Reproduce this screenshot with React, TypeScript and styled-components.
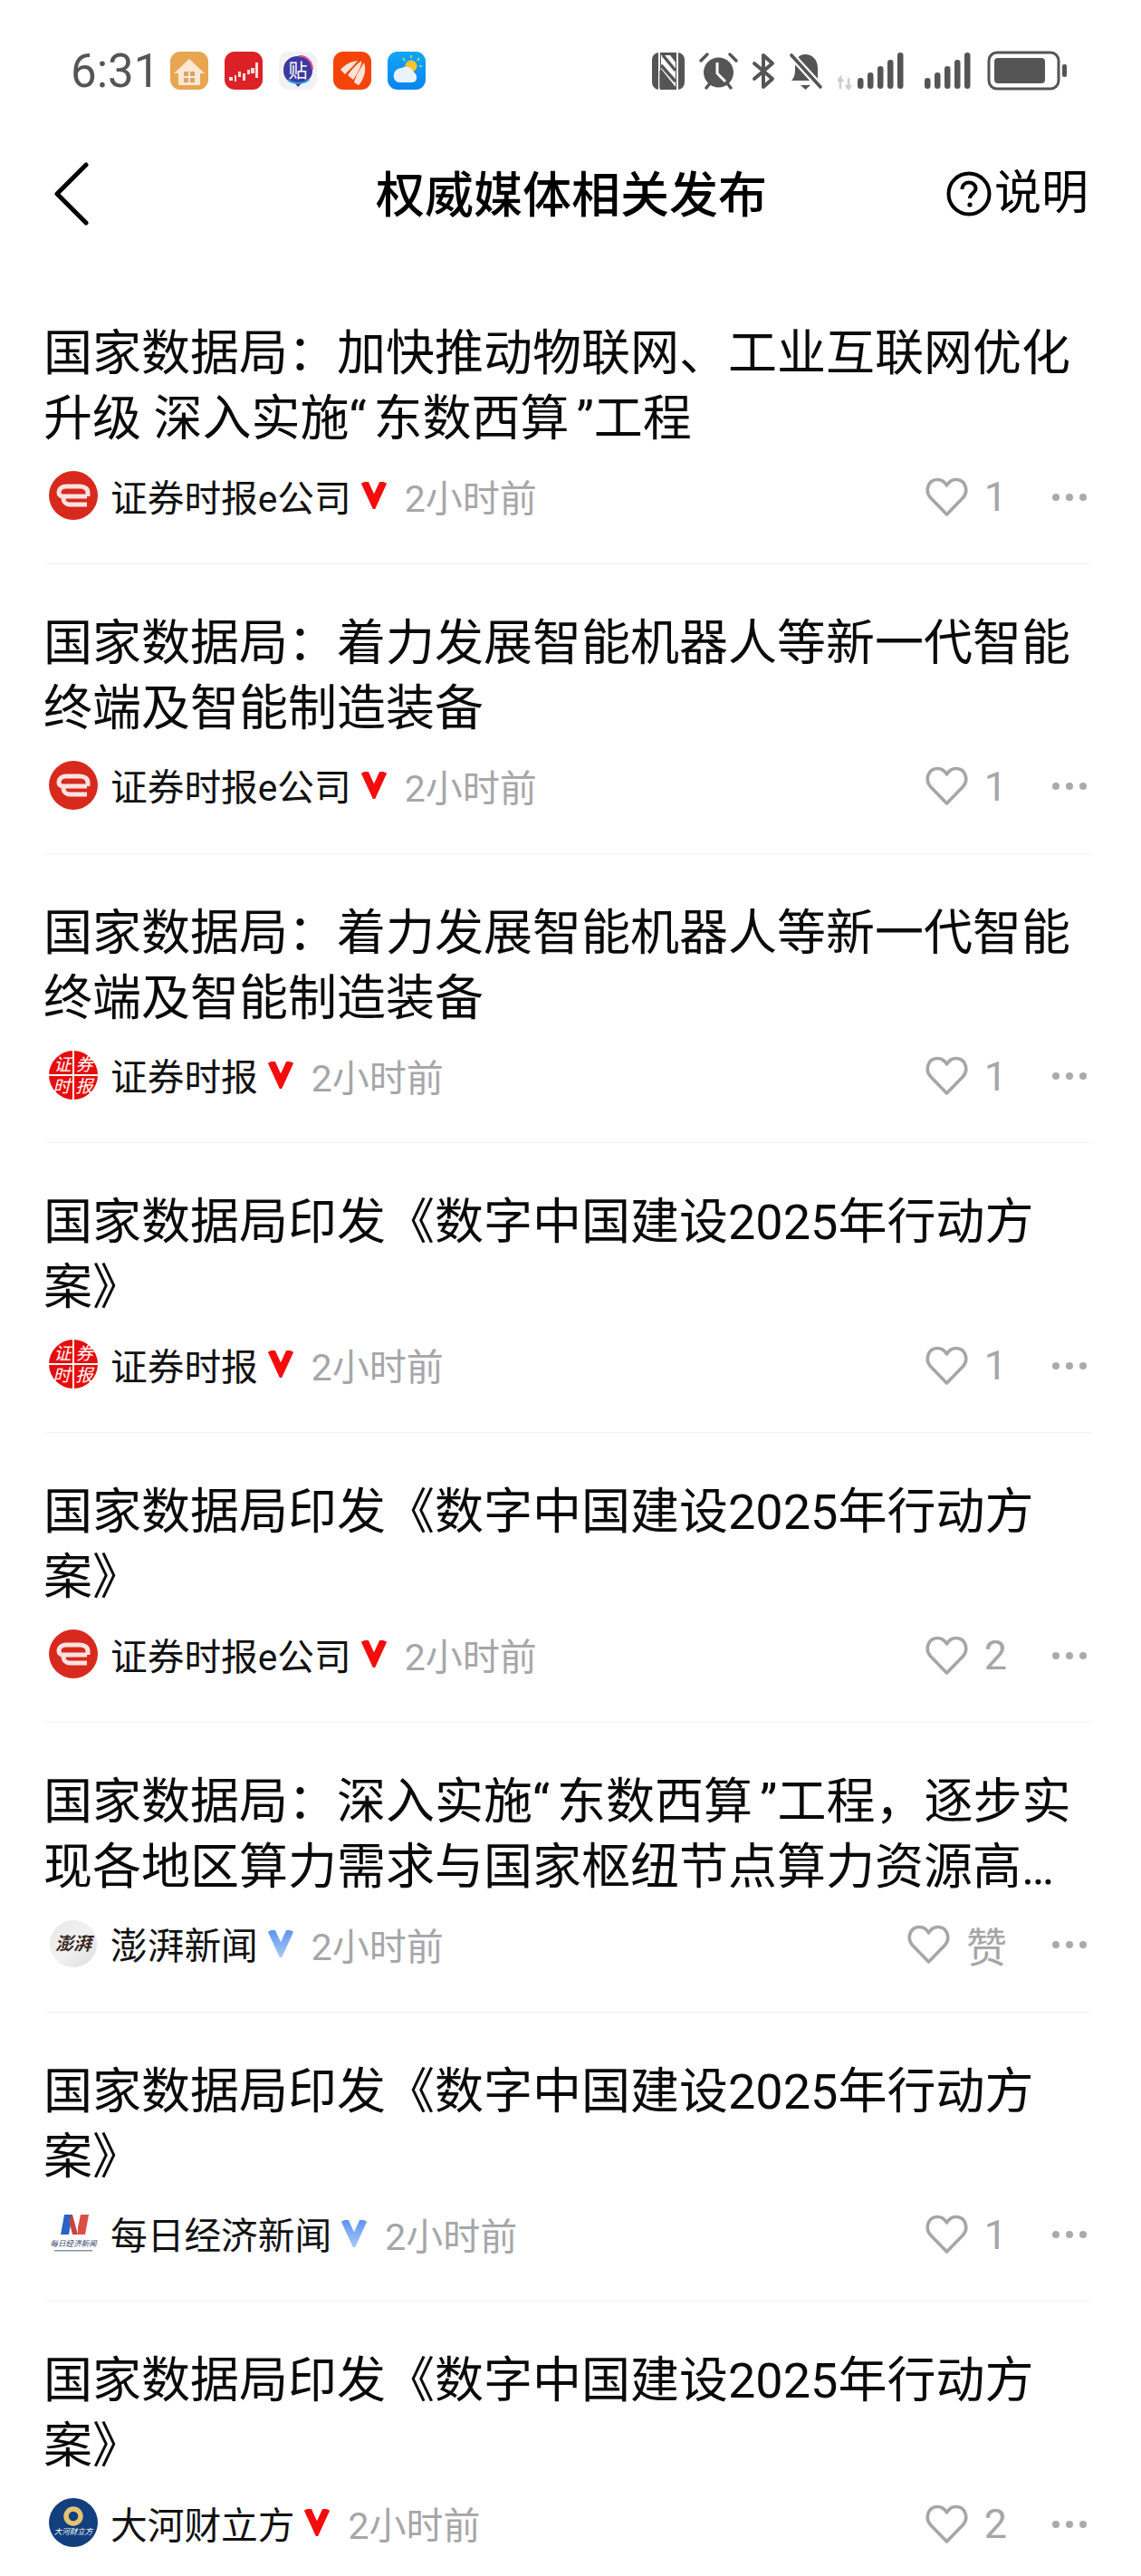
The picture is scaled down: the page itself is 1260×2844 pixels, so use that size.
import styled, { createGlobalStyle } from "styled-components";

const GlobalStyle = createGlobalStyle`
  html, body {
    margin: 0;
    padding: 0;
    background: #fff;
  }
  body {
    font-family: Roboto, "Noto Sans CJK SC", sans-serif;
    color: #000;
  }
`;

const Page = styled.div`
  width: 1260px;
  height: 2844px;
  overflow: hidden;
  background: #fff;
`;

const StatusBar = styled.div`
  height: 156px;
  padding: 0 82px 0 78px;
  box-sizing: border-box;
  display: flex;
  align-items: center;
`;

const Clock = styled.span`
  font-size: 51px;
  color: #555;
  width: 110px;
`;

const AppIcons = styled.div`
  display: flex;
  gap: 18px;
`;

const AppIcon = styled.div<{ $bg: string }>`
  width: 42px;
  height: 42px;
  border-radius: 11px;
  background: ${(props) => props.$bg};
  overflow: hidden;
  svg {
    display: block;
  }
`;

const SystemIcons = styled.div`
  margin-left: auto;
  display: flex;
  align-items: center;
  svg {
    display: block;
  }
`;

const NavBar = styled.div`
  height: 118px;
  padding: 0 58px 0 60px;
  display: grid;
  grid-template-columns: 1fr auto 1fr;
  align-items: center;
`;

const NavTitle = styled.h1`
  margin: 3px 0 0;
  font-size: 54px;
  font-weight: 500;
  line-height: 72px;
`;

const HelpLink = styled.div`
  justify-self: end;
  display: flex;
  align-items: center;
  gap: 3px;
  font-size: 52px;
  line-height: 72px;
  margin-top: -2px;
`;

const List = styled.div`
  padding: 29px 56px 0 48px;
`;

const Item = styled.div`
  padding-top: 52px;
  height: 319.75px;
  box-sizing: border-box;
  border-bottom: 1px solid #f1f1f1;
  margin-left: 3px;
`;

const Title = styled.div`
  font-size: 54px;
  line-height: 72px;
  height: 144px;
  margin-left: -3px;
  margin-right: -8px;
  color: #0a0a0a;
`;

const TitleLine = styled.div``;

const Quote = styled.span<{ $closing: boolean }>`
  margin: ${(props) => (props.$closing ? "0 0 0 8px" : "0 8px 0 0")};
`;

const Meta = styled.div`
  margin-top: 18px;
  height: 60px;
  display: flex;
  align-items: center;
`;

const Avatar = styled.div`
  width: 54px;
  height: 54px;
  margin-left: 3px;
  flex: none;
  svg {
    display: block;
  }
`;

const Source = styled.span`
  margin-left: 14px;
  font-size: 40.7px;
  color: #111;
`;

const Verified = styled.span`
  margin: 0 19px 0 10px;
  display: flex;
`;

const Time = styled.span`
  font-size: 41px;
  color: #a6a6a9;
`;

const Actions = styled.div`
  margin-left: auto;
  margin-top: 3px;
  padding-right: 4px;
  display: flex;
  align-items: center;
`;

const Count = styled.span`
  margin-left: 18px;
  font-size: 45px;
  color: #a6a6a9;
`;

const Dots = styled.div`
  margin-left: 50px;
  width: 38px;
  display: flex;
  justify-content: space-between;
`;

const Dot = styled.span`
  width: 8px;
  height: 8px;
  border-radius: 50%;
  background: #aaaaad;
`;

const grey = "#555";

function HomeIcon() {
  return (
    <svg width="42" height="42" viewBox="0 0 42 42">
      <path d="M21 8 L38 24 H33 V37 H9 V24 H4 Z" fill="#f9e8d2" />
      <path d="M15 22h5v5h-5zM22 22h5v5h-5zM15 29h5v5h-5zM22 29h5v5h-5z" fill="#dca268" />
    </svg>
  );
}

function StockIcon() {
  return (
    <svg width="42" height="42" viewBox="0 0 42 42">
      <g fill="#fff" opacity="0.85">
        <rect x="5" y="28" width="4" height="4" />
        <rect x="11" y="26" width="2" height="7" />
        <rect x="15" y="22" width="3" height="6" />
        <rect x="20" y="24" width="3" height="8" />
        <rect x="25" y="20" width="3" height="5" />
        <rect x="29" y="18" width="4" height="6" />
        <rect x="34" y="12" width="3" height="17" />
      </g>
    </svg>
  );
}

function TiebaIcon() {
  return (
    <svg width="42" height="42" viewBox="0 0 42 42">
      <path d="M21 5 C30 4 37 11 37 21 C37 30 30 34 25 35 L21 39 L18 35 C10 34 5 29 5 20 C5 11 12 5 21 5 Z" fill="#3d3a9f" />
      <path d="M22 5 C30 4 37 11 37 20" fill="none" stroke="#d8528f" strokeWidth="2" />
      <path d="M10 31 C15 36 27 36 33 31" fill="none" stroke="#2f9be8" strokeWidth="2" />
      <text x="21" y="28" fontSize="21" fill="#fff" textAnchor="middle" fontFamily="Noto Sans CJK SC">贴</text>
    </svg>
  );
}

function LeafIcon() {
  return (
    <svg width="42" height="42" viewBox="0 0 42 42">
      <path d="M8 20 C14 13 20 11 27 10 C24 14 18 20 13 25 Z" fill="#fbe3d6" />
      <path d="M16 26 C20 20 26 14 31 10 C32 14 28 22 22 31 Z" fill="#fbe3d6" />
      <path d="M23 34 C25 26 30 19 34 12 C37 20 34 31 28 37 Z" fill="#fbe3d6" />
    </svg>
  );
}

function WeatherIcon() {
  return (
    <svg width="42" height="42" viewBox="0 0 42 42">
      <circle cx="26" cy="16" r="6.5" fill="#f9c52e" />
      <path d="M26 4v3M35 7l-2 3M38 16h-3M17 7l2 3" stroke="#bfe25a" strokeWidth="1.6" />
      <path d="M14 34 C8 34 6 29 7 25 C8 20 12 18 16 18 C20 15 28 18 29 23 C33 24 34 34 27 34 Z" fill="#eaf3fb" />
    </svg>
  );
}

function NfcIcon() {
  return (
    <svg width="36" height="41" viewBox="0 0 36 41" style={{ marginRight: 16 }}>
      <rect x="0" y="0" width="36" height="41" rx="8" fill={grey} />
      <path d="M8 0 V41 M28 0 V41" stroke="#fff" strokeWidth="2" />
      <path d="M10 3 H20 L26 11 V38 L10 18 Z" fill="#fff" />
      <path d="M12 3 L26 20 M10 14 L26 32 M10 24 L22 38 H10 Z" fill={grey} stroke={grey} strokeWidth="3.4" />
    </svg>
  );
}

function AlarmIcon() {
  return (
    <svg width="43" height="41" viewBox="0 0 43 41" style={{ marginRight: 15 }}>
      <circle cx="21.5" cy="22" r="16.5" fill={grey} />
      <path d="M2 9 L9 2 M41 9 L34 2 M8 39 L12 34 M35 39 L31 34" stroke={grey} strokeWidth="3.4" strokeLinecap="round" />
      <path d="M20 11 V23 L29 32" fill="none" stroke="#fff" strokeWidth="3" />
    </svg>
  );
}

function BluetoothIcon() {
  return (
    <svg width="26" height="41" viewBox="0 0 26 41" style={{ marginRight: 16 }}>
      <path d="M3 12 L23 29 L13 38 V3 L23 12 L3 29" fill="none" stroke={grey} strokeWidth="4" strokeLinecap="round" strokeLinejoin="round" />
    </svg>
  );
}

function MutedBellIcon() {
  return (
    <svg width="36" height="41" viewBox="0 0 36 41" style={{ marginRight: 17 }}>
      <path d="M17 2 C25 2 31 8 31 17 V31 H2 C6 27 6 22 6 17 C6 8 10 2 17 2 Z" fill={grey} />
      <path d="M12 36 h11 L17.5 41 Z" fill={grey} />
      <path d="M2 3 L34 38" stroke="#fff" strokeWidth="8" />
      <path d="M2 3 L34 38" stroke={grey} strokeWidth="3.6" strokeLinecap="round" />
    </svg>
  );
}

function SignalIcon({ withData }: { withData?: boolean }) {
  const bars = [12, 18, 25, 32, 40];
  const offset = withData ? 22 : 0;
  return (
    <svg width={offset + 52} height="41" viewBox={`0 0 ${offset + 52} 41`} style={{ marginRight: withData ? 22 : 17 }}>
      {withData && <path d="M3 40 V28 L0 32 M3 28 L6 32 M12 28 V40 L9 36 M12 40 L15 36" fill="none" stroke="#cfcfcf" strokeWidth="2.6" />}
      {bars.map((h, i) => (
        <rect key={h} x={offset + i * 11} y={40 - h} width="6.5" height={h} rx="3.2" fill={grey} />
      ))}
    </svg>
  );
}

function BatteryIcon() {
  return (
    <svg width="88" height="44" viewBox="0 0 88 44">
      <rect x="2" y="2" width="77" height="40" rx="9" fill="none" stroke={grey} strokeWidth="3" />
      <rect x="8" y="8" width="56" height="28" rx="4" fill={grey} />
      <rect x="83" y="15" width="5" height="14" rx="2" fill={grey} />
    </svg>
  );
}

function EcompanyLogo() {
  return (
    <svg width="54" height="54" viewBox="0 0 54 54">
      <circle cx="27" cy="27" r="27" fill="#d8291f" />
      <path d="M42 28 H16 C13 28 11 26 11 24 C11 19 15 17 19 17 H34 C40 17 43 20 43 24 V28 M16 28 V30 C16 34 19 37 23 37 H42" fill="none" stroke="#fbe3df" strokeWidth="5" />
    </svg>
  );
}

function StcnLogo() {
  return (
    <svg width="54" height="54" viewBox="0 0 54 54">
      <circle cx="27" cy="27" r="27" fill="#e60d0d" />
      <path d="M0 27 H54 M27 0 V54" stroke="#fff" strokeWidth="2" />
      <g fill="#fff" fontSize="19" fontFamily="Liberation Serif, Noto Sans CJK SC" textAnchor="middle" fontStyle="italic">
        <text x="15" y="22">证</text>
        <text x="39" y="22">券</text>
        <text x="14" y="46">时</text>
        <text x="39" y="46">报</text>
      </g>
    </svg>
  );
}

function PaperLogo() {
  return (
    <svg width="54" height="54" viewBox="0 0 54 54">
      <defs>
        <linearGradient id="paperBg" x1="0" y1="0" x2="1" y2="1">
          <stop offset="0" stopColor="#e6e6e6" />
          <stop offset="0.5" stopColor="#f2f2f2" />
          <stop offset="1" stopColor="#dcdcdc" />
        </linearGradient>
      </defs>
      <circle cx="27" cy="27" r="26" fill="url(#paperBg)" />
      <text x="27" y="34" fontSize="20" fill="#3a2a26" textAnchor="middle" fontStyle="italic" fontWeight="700" fontFamily="Noto Sans CJK SC">澎湃</text>
    </svg>
  );
}

function NbdLogo() {
  return (
    <svg width="54" height="54" viewBox="0 0 54 54">
      <path d="M17 6 H26 L22 28 H13 Z" fill="#2a63c7" />
      <path d="M26 6 L32 28 H26 L22 12 Z" fill="#c2463e" />
      <path d="M32 28 H40 L44 6 H35 L32 20 Z" fill="#dc4f45" />
      <text x="27" y="41" fontSize="8.5" fill="#33446e" textAnchor="middle" fontStyle="italic" fontFamily="Noto Sans CJK SC">每日经济新闻</text>
      <rect x="6" y="45" width="42" height="1.5" fill="#8a93a8" />
    </svg>
  );
}

function DaheLogo() {
  return (
    <svg width="54" height="54" viewBox="0 0 54 54">
      <circle cx="27" cy="27" r="27" fill="#123f7d" />
      <circle cx="27" cy="20" r="8" fill="none" stroke="#e4c372" strokeWidth="5.5" />
      <text x="27" y="40" fontSize="8.5" fill="#fff" textAnchor="middle" fontStyle="italic" fontFamily="Noto Sans CJK SC">大河财立方</text>
    </svg>
  );
}

function RedV() {
  return (
    <svg width="30" height="30" viewBox="0 0 30 30">
      <path d="M4.5 0 L15 23 L25.5 0" fill="none" stroke="#f50c0c" strokeWidth="8" />
    </svg>
  );
}

function BlueV() {
  return (
    <svg width="30" height="30" viewBox="0 0 30 30">
      <defs>
        <linearGradient id="blueV" gradientUnits="userSpaceOnUse" x1="0" y1="0" x2="0" y2="30">
          <stop offset="0" stopColor="#5d95ee" />
          <stop offset="1" stopColor="#a9c8f7" />
        </linearGradient>
      </defs>
      <path d="M4.5 0 L15 23 L25.5 0" fill="none" stroke="url(#blueV)" strokeWidth="8" />
    </svg>
  );
}

function HeartIcon() {
  return (
    <svg width="47" height="44" viewBox="0 0 47 44" style={{ display: "block" }}>
      <path
        d="M23.5 41 L5.5 22.5 C-1 15 3 3 12.5 2.5 C17 2.3 21 4.5 23.5 9 C26 4.5 30 2.3 34.5 2.5 C44 3 48 15 41.5 22.5 Z"
        fill="none"
        stroke="#a6a6a9"
        strokeWidth="3.6"
        strokeLinejoin="round"
      />
    </svg>
  );
}

const dataTitle = "国家数据局印发《数字中国建设2025年行动方案》";
const robotTitle = "国家数据局：着力发展智能机器人等新一代智能终端及智能制造装备";

// titles with quotes carry their own line break, the quotes need extra room
const news = [
  { id: 1, title: "国家数据局：加快推动物联网、工业互联网优化\n升级 深入实施“东数西算”工程", logo: <EcompanyLogo />, source: "证券时报e公司", red: true, likes: "1" },
  { id: 2, title: robotTitle, logo: <EcompanyLogo />, source: "证券时报e公司", red: true, likes: "1" },
  { id: 3, title: robotTitle, logo: <StcnLogo />, source: "证券时报", red: true, likes: "1" },
  { id: 4, title: dataTitle, logo: <StcnLogo />, source: "证券时报", red: true, likes: "1" },
  { id: 5, title: dataTitle, logo: <EcompanyLogo />, source: "证券时报e公司", red: true, likes: "2" },
  { id: 6, title: "国家数据局：深入实施“东数西算”工程，逐步实\n现各地区算力需求与国家枢纽节点算力资源高…", logo: <PaperLogo />, source: "澎湃新闻", red: false, likes: "赞" },
  { id: 7, title: dataTitle, logo: <NbdLogo />, source: "每日经济新闻", red: false, likes: "1" },
  { id: 8, title: dataTitle, logo: <DaheLogo />, source: "大河财立方", red: true, likes: "2" },
];

function renderLine(line: string) {
  return line.split(/(“|”)/).map((part, i) =>
    part === "“" || part === "”" ? (
      <Quote key={i} $closing={part === "”"}>{part}</Quote>
    ) : (
      part
    )
  );
}

function App() {
  return (
    <Page lang="zh-CN">
      <GlobalStyle />
      <StatusBar>
        <Clock>6:31</Clock>
        <AppIcons>
          <AppIcon $bg="#e8a552"><HomeIcon /></AppIcon>
          <AppIcon $bg="#dc2127"><StockIcon /></AppIcon>
          <AppIcon $bg="#f2f2f4"><TiebaIcon /></AppIcon>
          <AppIcon $bg="#f4440a"><LeafIcon /></AppIcon>
          <AppIcon $bg="linear-gradient(#12a5f5, #0a84f0)"><WeatherIcon /></AppIcon>
        </AppIcons>
        <SystemIcons>
          <NfcIcon />
          <AlarmIcon />
          <BluetoothIcon />
          <MutedBellIcon />
          <SignalIcon withData />
          <SignalIcon />
          <BatteryIcon />
        </SystemIcons>
      </StatusBar>
      <NavBar>
        <svg width="38" height="70" viewBox="0 0 38 70" style={{ marginTop: -3 }}>
          <path d="M35 3 L3 35 L35 67" fill="none" stroke="#000" strokeWidth="5" strokeLinecap="round" strokeLinejoin="round" />
        </svg>
        <NavTitle>权威媒体相关发布</NavTitle>
        <HelpLink>
          <svg width="50" height="50" viewBox="0 0 50 50">
            <circle cx="25" cy="25" r="22.5" fill="none" stroke="#000" strokeWidth="4" />
            <path d="M17.5 20 C17.5 15 21 12.5 25 12.5 C29.5 12.5 32.5 15.5 32.5 19 C32.5 24 26 24.5 26 30" fill="none" stroke="#000" strokeWidth="4" />
            <circle cx="26" cy="37" r="2.6" fill="#000" />
          </svg>
          说明
        </HelpLink>
      </NavBar>
      <List>
        {news.map((item) => (
          <Item key={item.id}>
            <Title>
              {item.title.split("\n").map((line) => (
                <TitleLine key={line}>{renderLine(line)}</TitleLine>
              ))}
            </Title>
            <Meta>
              <Avatar>{item.logo}</Avatar>
              <Source>{item.source}</Source>
              <Verified>{item.red ? <RedV /> : <BlueV />}</Verified>
              <Time>2小时前</Time>
              <Actions>
                <HeartIcon />
                <Count>{item.likes}</Count>
                <Dots>
                  <Dot />
                  <Dot />
                  <Dot />
                </Dots>
              </Actions>
            </Meta>
          </Item>
        ))}
      </List>
    </Page>
  );
}

export default App;
